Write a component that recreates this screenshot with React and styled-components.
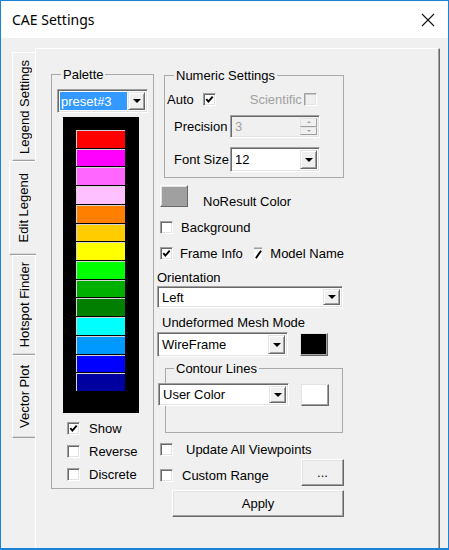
import React from 'react'
import styled, { createGlobalStyle } from 'styled-components';

const Global = createGlobalStyle`
html, body {
  margin: 0;
  padding: 0;
}
body {
  width: 449px;
  height: 550px;
  overflow: hidden;
  background: #fff;
  font-family: "Liberation Sans", Arial, sans-serif;
  font-size: 13px;
  color: #000;
}
`

const Window = styled.div`
width: 449px;
height: 550px;
box-sizing: border-box;
border: 1px solid #1883d7;
border-bottom-width: 2px;
display: flex;
flex-direction: column;
background: #f0f0f0;
overflow: hidden;
`

const TitleBar = styled.div`
height: 37px;
flex: none;
background: #fff;
display: flex;
align-items: center;
justify-content: space-between;
padding: 0 13px 0 11px;
font-family: "Noto Sans", sans-serif;
font-size: 14px;
color: #000;
`

const Body = styled.div`
flex: 1;
min-height: 0;
display: flex;
padding: 10px 8px 0 8px;
`

const TabStrip = styled.div`
width: 26px;
flex: none;
display: flex;
flex-direction: column;
padding-top: 4px;
`

const Tab = styled.div`
box-sizing: border-box;
height: ${p => p.$len}px;
width: ${p => p.$active ? 27 : 23}px;
margin-left: ${p => p.$active ? 0 : 3}px;
position: relative;
z-index: ${p => p.$active ? 2 : 1};
display: flex;
align-items: center;
justify-content: center;
background: #f0f0f0;
border-left: 1px solid #fff;
border-top: 1px solid #fff;
border-bottom: 1px solid #a0a0a0;
box-shadow: inset 0 -1px 0 #d8d8d8;
`

const TabLabel = styled.span`
writing-mode: vertical-rl;
transform: rotate(180deg);
white-space: nowrap;
font-size: 13px;
line-height: 15px;
`

const Panel = styled.div`
flex: 1;
display: flex;
align-items: flex-start;
gap: 3px;
padding: 18px 0 0 15px;
border-top: 1px solid #fff;
border-left: 1px solid #fff;
border-right: 1px solid #696969;
box-shadow: inset -1px 0 0 #a0a0a0;
`

const GroupBox = styled.fieldset`
margin: 0;
margin-left: ${p => p.$ml || 0}px;
margin-top: ${p => p.$mt || 0}px;
width: ${p => p.$w}px;
box-sizing: border-box;
padding: ${p => p.$pad};
border: 1px solid #a9a9a9;
min-width: 0;
`

const Legend = styled.legend`
padding: 0 2px;
margin-left: ${p => p.$ml || 4}px;
font-size: 13px;
line-height: 15px;
`

const Column = styled.div`
width: 187px;
display: flex;
flex-direction: column;
`

const Row = styled.div`
display: flex;
align-items: ${p => p.$align || 'center'};
margin-top: ${p => p.$mt || 0}px;
margin-left: ${p => p.$ml || 0}px;
`

const Text = styled.span`
font-size: 13px;
line-height: 15px;
white-space: nowrap;
color: ${p => p.$disabled ? '#a0a0a0' : '#000'};
margin-left: ${p => p.$ml || 0}px;
margin-top: ${p => p.$mt || 0}px;
width: ${p => p.$w ? p.$w + 'px' : 'auto'};
`

const Box = styled.span`
box-sizing: border-box;
width: 13px;
height: 13px;
flex: none;
display: inline-flex;
align-items: center;
justify-content: center;
background: ${p => p.$disabled ? '#f0f0f0' : '#fff'};
border: 1px solid;
border-color: #a0a0a0 #fff #fff #a0a0a0;
box-shadow: inset 1px 1px 0 ${p => p.$disabled ? '#c8c8c8' : '#696969'}, inset -1px -1px 0 #e3e3e3;
margin-left: ${p => p.$ml || 0}px;
`

const Check = ({ checked, disabled, ml }) => (
  <Box $disabled={disabled} $ml={ml}>
    {checked && (
      <svg width="9" height="9" viewBox="0 0 9 9">
        <polyline points="1.3,4.2 3.4,6.6 7.7,1.6" fill="none" stroke="#000" strokeWidth="1.9" />
      </svg>
    )}
  </Box>
)

const CheckRow = ({ label, checked, gap = 8, mt, ml, children }) => (
  <Row $mt={mt} $ml={ml}>
    <Check checked={checked} />
    <Text $ml={gap}>{label}</Text>
    {children}
  </Row>
)

const Combo = styled.div`
display: flex;
box-sizing: border-box;
flex: none;
width: ${p => p.$w}px;
height: ${p => p.$h || 23}px;
margin-left: ${p => p.$ml || 0}px;
background: ${p => p.$disabled ? '#f0f0f0' : '#fff'};
border: 1px solid;
border-color: #a0a0a0 #fff #fff #a0a0a0;
box-shadow: inset 1px 1px 0 #696969, inset -1px -1px 0 #e3e3e3;
padding: 2px 2px 2px 2px;
`

const Value = styled.div`
flex: 1;
display: flex;
align-items: center;
padding-left: 2px;
font-size: 13px;
color: ${p => p.$disabled ? '#a0a0a0' : '#000'};
`

const Selected = styled.span`
background: #3399ff;
color: #fff;
align-self: stretch;
display: flex;
align-items: center;
padding: 0 2px 0 1px;
margin-left: -2px;
flex: 1;
margin-right: 1px;
`

const DropBtn = styled.div`
width: 17px;
box-sizing: border-box;
background: #f0f0f0;
border: 1px solid;
border-color: #e3e3e3 #696969 #696969 #e3e3e3;
box-shadow: inset 1px 1px 0 #fff, inset -1px -1px 0 #a0a0a0;
display: flex;
align-items: center;
justify-content: center;
&::after {
  content: "";
  border-left: 4px solid transparent;
  border-right: 4px solid transparent;
  border-top: 4px solid #000;
}
`

const SpinCol = styled.div`
width: 17px;
display: flex;
flex-direction: column;
`

const SpinBtn = styled.div`
flex: 1;
box-sizing: border-box;
border: 1px solid;
border-color: #e3e3e3 #a0a0a0 #a0a0a0 #e3e3e3;
display: flex;
align-items: center;
justify-content: center;
&::after {
  content: "";
  border-left: 2px solid transparent;
  border-right: 2px solid transparent;
  ${p => p.$up ? 'border-bottom: 2px solid #a0a0a0;' : 'border-top: 2px solid #a0a0a0;'}
}
`

const ComboBox = ({ value, w, h, ml }) => (
  <Combo $w={w} $h={h} $ml={ml}>
    <Value>{value}</Value>
    <DropBtn />
  </Combo>
)

const Raised = styled.div`
box-sizing: border-box;
flex: none;
width: ${p => p.$w}px;
height: ${p => p.$h}px;
margin-left: ${p => p.$ml || 0}px;
margin-top: ${p => p.$mt || 0}px;
background: ${p => p.$fill || '#f0f0f0'};
border: 1px solid;
border-color: #fff #696969 #696969 #fff;
box-shadow: inset -1px -1px 0 #a0a0a0, inset 1px 1px 0 #e3e3e3;
display: flex;
align-items: center;
justify-content: center;
font-size: 13px;
`

const Swatch = styled.div`
box-sizing: border-box;
width: 28px;
height: ${p => p.$h}px;
margin-left: ${p => p.$ml || 0}px;
background: ${p => p.$fill};
border: 1px solid;
border-color: #e3e3e3 #696969 #696969 #e3e3e3;
box-shadow: inset -1px -1px 0 #a0a0a0;
`

const LegendStrip = styled.div`
box-sizing: border-box;
width: 76px;
height: 296px;
margin: 4px 0 0 6px;
background: #000;
padding: 13px 14px 22px 13px;
display: flex;
flex-direction: column;
gap: 1px;
`

const Band = styled.div`
flex: 1;
background: ${p => p.$c};
border-top: 1px solid #d4d4d4;
border-left: 1px solid #d4d4d4;
`

const PaletteChecks = styled.div`
display: flex;
flex-direction: column;
gap: 8px;
margin: 8px 0 0 10px;
`

const CloseIcon = () => (
  <svg width="14" height="14" viewBox="0 0 14 14">
    <path d="M1 1 L13 13 M13 1 L1 13" stroke="#111" strokeWidth="1.1" />
  </svg>
)

const ModelMark = () => (
  <svg width="9" height="14" viewBox="0 0 9 14" style={{ marginLeft: 11 }}>
    <rect x="0" y="0" width="9" height="2" fill="#a0a0a0" />
    <rect x="0" y="2" width="9" height="12" fill="#fff" />
    <path d="M7.5 3.5 L2 11.5" stroke="#000" strokeWidth="2" />
  </svg>
)

const bands = ['#ff0000', '#ff00ff', '#ff66ff', '#ffc0ff', '#ff8000', '#ffcc00', '#ffff00',
  '#00ff00', '#00b000', '#007f00', '#00ffff', '#0099ff', '#0000ff', '#0000a0'];

const tabs = [
  { label: 'Legend Settings', len: 109 },
  { label: 'Edit Legend', len: 94, active: true },
  { label: 'Hotspot Finder', len: 100 },
  { label: 'Vector Plot', len: 83 },
];

const App = () => {
  return (
    <Window>
      <Global />
      <TitleBar>
        <span>CAE Settings</span>
        <CloseIcon />
      </TitleBar>
      <Body>
        <TabStrip>
          {tabs.map(t => (
            <Tab key={t.label} $len={t.len} $active={t.active}>
              <TabLabel>{t.label}</TabLabel>
            </Tab>
          ))}
        </TabStrip>
        <Panel>
          <GroupBox $w={103} $pad="7px 5px 6px 5px">
            <Legend $ml={4}>Palette</Legend>
            <Combo $w={91} $h={24}>
              <Value><Selected>preset#3</Selected></Value>
              <DropBtn />
            </Combo>
            <LegendStrip>
              {bands.map(c => <Band key={c} $c={c} />)}
            </LegendStrip>
            <PaletteChecks>
              <CheckRow label="Show" checked gap={9} />
              <CheckRow label="Reverse" gap={9} />
              <CheckRow label="Discrete" gap={9} />
            </PaletteChecks>
          </GroupBox>

          <Column>
            <GroupBox $w={180} $ml={7} $mt={1} $pad="6px 0 5px 2px">
              <Legend $ml={7}>Numeric Settings</Legend>
              <Row style={{ height: 20 }}>
                <Text>Auto</Text>
                <Check checked ml={9} />
                <Text $disabled $ml={34}>Scientific</Text>
                <Check disabled ml={2} />
              </Row>
              <Row $mt={6} $ml={7}>
                <Text $w={56}>Precision</Text>
                <Combo $w={90} $h={23} $disabled>
                  <Value $disabled>3</Value>
                  <SpinCol>
                    <SpinBtn $up />
                    <SpinBtn />
                  </SpinCol>
                </Combo>
              </Row>
              <Row $mt={9} $ml={7}>
                <Text $w={56}>Font Size</Text>
                <ComboBox value="12" w={90} h={25} />
              </Row>
            </GroupBox>

            <Row $mt={7} $ml={3} $align="flex-start">
              <Raised $w={28} $h={22} $fill="#a0a0a0" />
              <Text $ml={15} $mt={9}>NoResult Color</Text>
            </Row>
            <CheckRow label="Background" mt={11} ml={3} gap={8} />
            <CheckRow label="Frame Info" checked mt={11} ml={3} gap={7}>
              <ModelMark />
              <Text $ml={8}>Model Name</Text>
            </CheckRow>
            <Text $mt={9}>Orientation</Text>
            <Row $mt={1}>
              <ComboBox value="Left" w={186} h={22} />
            </Row>
            <Text $mt={7} $ml={5}>Undeformed Mesh Mode</Text>
            <Row $mt={2}>
              <ComboBox value="WireFrame" w={131} h={25} />
              <Swatch $fill="#000" $h={23} $ml={12} />
            </Row>
            <GroupBox $w={178} $ml={8} $mt={4} $pad="7px 0 26px 0">
              <Legend $ml={8}>Contour Lines</Legend>
              <Row style={{ marginLeft: -8 }}>
                <ComboBox value="User Color" w={131} h={23} />
                <Swatch $fill="#fff" $h={22} $ml={12} />
              </Row>
            </GroupBox>
            <CheckRow label="Update All Viewpoints" mt={9} ml={3} gap={13} />
            <Row $align="flex-start" $mt={2}>
              <Row $mt={9} $ml={3}>
                <Check />
                <Text $ml={9}>Custom Range</Text>
              </Row>
              <Raised $w={43} $h={27} style={{ marginLeft: 'auto', marginRight: 0 }}>...</Raised>
            </Row>
            <Raised $w={172} $h={27} $ml={15} $mt={4}>Apply</Raised>
          </Column>
        </Panel>
      </Body>
    </Window>
  );
};

export default App
